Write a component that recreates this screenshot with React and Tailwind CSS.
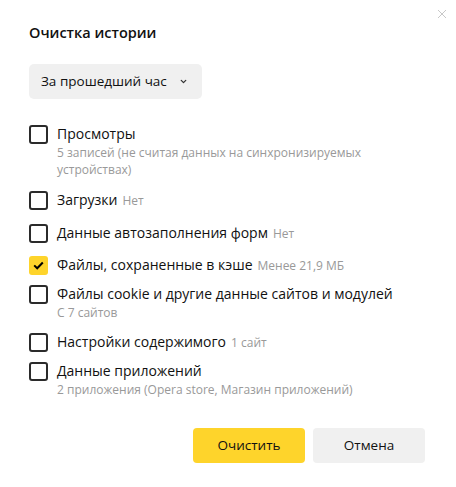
import { FiChevronDown } from "react-icons/fi";

const items = [
  {
    label: "Просмотры",
    sub: "5 записей (не считая данных на синхронизируемых устройствах)",
    gap: "mt-0",
  },
  { label: "Загрузки", note: "Нет", gap: "mt-3" },
  { label: "Данные автозаполнения форм", note: "Нет", gap: "mt-3" },
  {
    label: "Файлы, сохраненные в кэше",
    note: "Менее 21,9 МБ",
    checked: true,
    gap: "mt-[11px]",
  },
  {
    label: "Файлы cookie и другие данные сайтов и модулей",
    sub: "С 7 сайтов",
    gap: "mt-2",
  },
  { label: "Настройки содержимого", note: "1 сайт", gap: "mt-[11px]" },
  {
    label: "Данные приложений",
    sub: "2 приложения (Opera store, Магазин приложений)",
    gap: "mt-2",
  },
];

const Checkbox = ({ checked }) =>
  checked ? (
    <span className="flex items-center justify-center w-[19px] h-[19px] rounded-[3px] bg-[#fed42b] shrink-0">
      <svg width="11" height="9" viewBox="0 0 11 9" fill="none">
        <path d="M1.2 4.4 4.2 7.3 9.8 1.5" stroke="#000" strokeWidth="2" />
      </svg>
    </span>
  ) : (
    <span className="block w-[19px] h-[19px] rounded-[3px] border-2 border-[#2b2b2b] shrink-0" />
  );

export default function App() {
  return (
    <div
      className="relative w-[456px] h-[487px] bg-white text-[#1a1a1a] pl-[29px] pr-[29px] pt-[23px]"
      style={{ fontFamily: '"Open Sans", "Noto Sans", sans-serif' }}
    >
      <button className="absolute top-[8px] right-[8px] w-[12px] h-[12px] flex items-center justify-center">
        <svg width="10" height="10" viewBox="0 0 10 10">
          <path d="M1 1 9 9M9 1 1 9" stroke="#c8c8c8" strokeWidth="1" />
        </svg>
      </button>

      <h2 className="text-[14.5px] leading-5 font-semibold text-[#111]">
        Очистка истории
      </h2>

      <button className="mt-[21px] flex items-center h-[35px] w-[173px] pl-3 pr-[14px] rounded-[5px] bg-[#f0f0f0] text-[13.5px] text-[#111]">
        <span>За прошедший час</span>
        <FiChevronDown size={9} strokeWidth={3.5} className="ml-auto text-[#333]" />
      </button>

      <div className="mt-[25px] flex flex-col">
        {items.map((item) => (
          <div key={item.label} className={`flex gap-[9px] ${item.gap}`}>
            <div className="pt-[1px]">
              <Checkbox checked={item.checked} />
            </div>
            <div className="flex-1">
              <p className="text-[14px] leading-5 text-[#111]">
                {item.label}
                {item.note && (
                  <span className="ml-[5px] text-[12px] text-[#999]">
                    {item.note}
                  </span>
                )}
              </p>
              {item.sub && (
                <p className="text-[12px] leading-[17px] text-[#999] pr-2">
                  {item.sub}
                </p>
              )}
            </div>
          </div>
        ))}
      </div>

      <div className="absolute left-[193px] top-[428px] flex gap-2">
        <button className="w-[112px] h-[35px] rounded-[4px] bg-[#fed42b] text-[13.5px] text-[#111]">
          Очистить
        </button>
        <button className="w-[112px] h-[35px] rounded-[4px] bg-[#f0f0f0] text-[13.5px] text-[#111]">
          Отмена
        </button>
      </div>
    </div>
  );
}
